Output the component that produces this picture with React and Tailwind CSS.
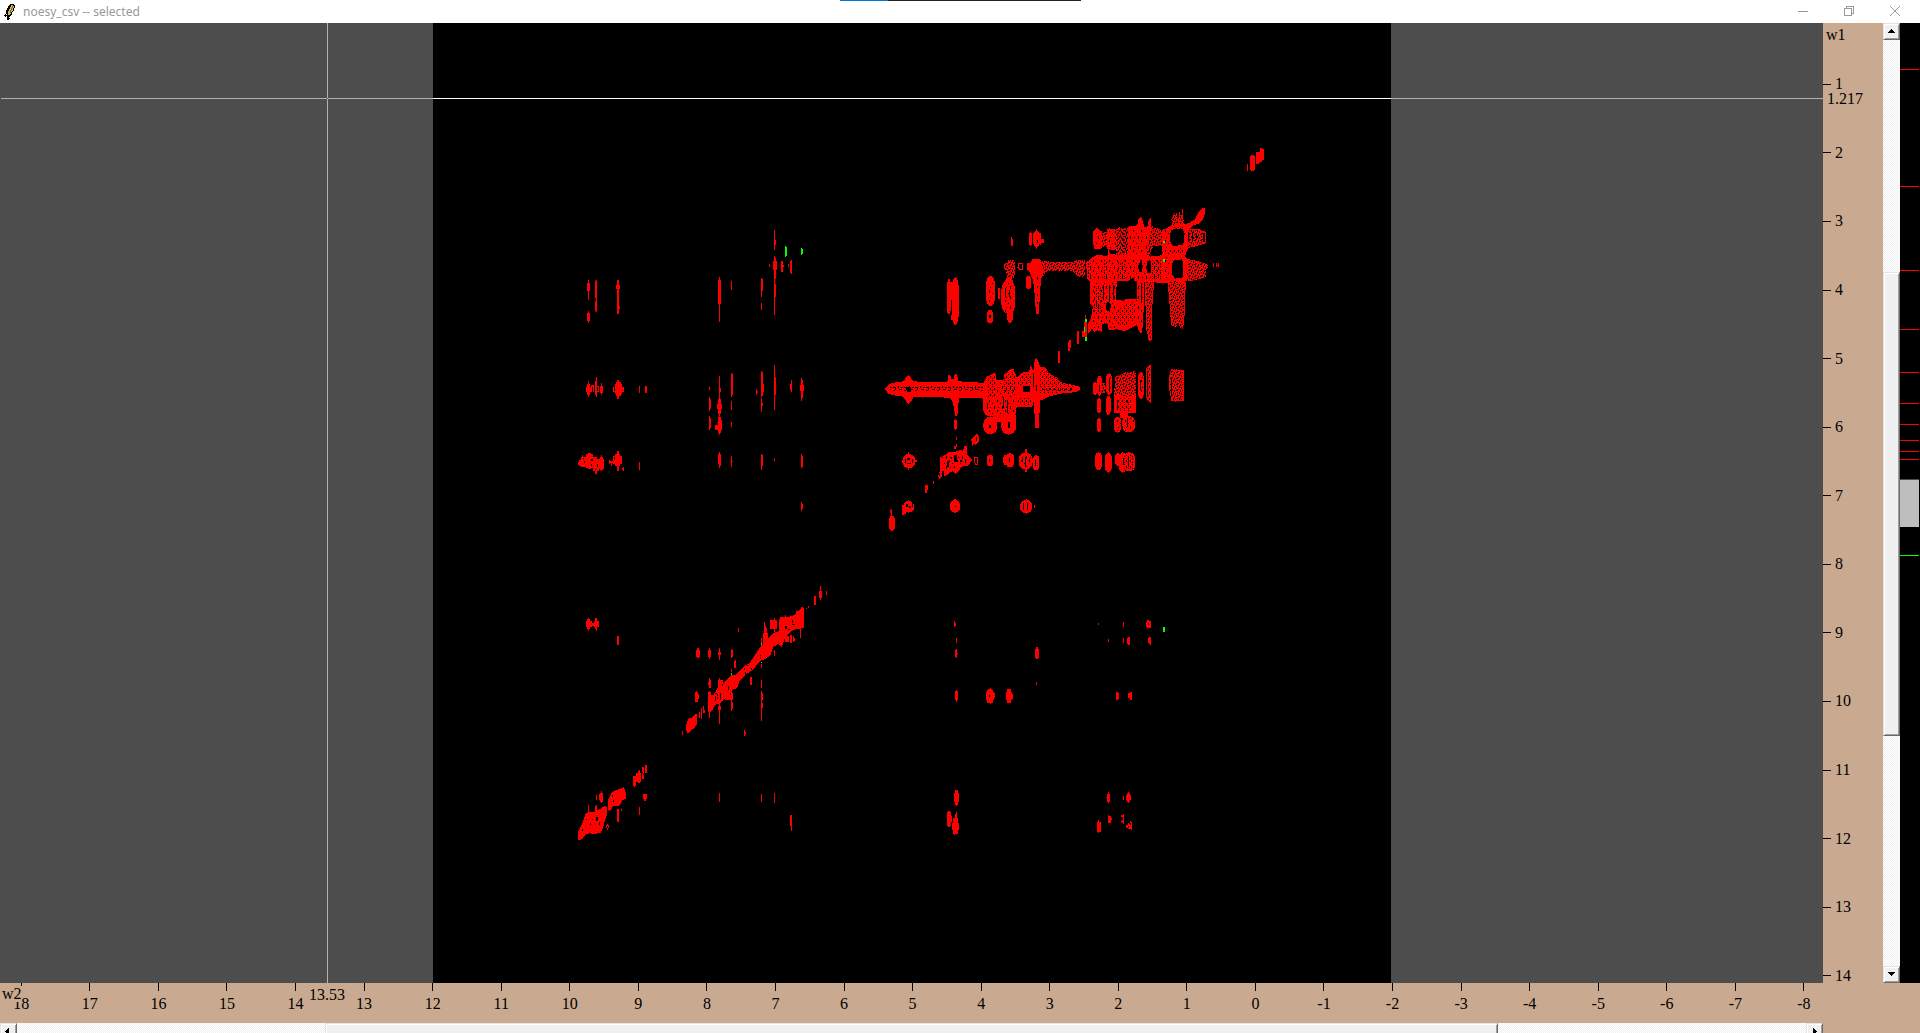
import React from "react";

const X_TICKS = Array.from({ length: 27 }, (_, i) => 18 - i);
const Y_TICKS = Array.from({ length: 14 }, (_, i) => i + 1);

const LEVELS = [69, 186, 270, 329, 372, 403, 424, 440, 451, 459];

/* Peak boxes are "x0 y0 x1 y1" lists, in thirds of a plot pixel, relative to the zone's origin. */
const ZONES = [
  {
    id: "upper-left",
    x: 550,
    y: 220,
    red: `114 180 117 240,111 189 120 214,111 278 120 303,114 273 117 309,135 183 141 234,138 180 141 276,135 243 141 273,
      201 180 207 282,198 194 210 208,204 258 210 267,504 180 513 252,507 171 510 306,543 183 546 210,633 174 636 231,633 177 639 213,
      633 249 636 270,672 30 675 90,672 60 678 75,672 108 675 285,669 123 681 150,672 114 678 177,672 192 678 231,657 132 660 141,
      693 123 699 156,699 135 702 141,714 132 717 141,720 123 726 159,723 120 726 162,
      108 500 126 516,111 491 120 524,114 483 117 531,123 495 132 500,129 500 131 516,135 483 140 526,138 471 141 531,141 498 147 516,
      150 498 159 519,153 489 156 525,189 500 222 516,195 491 216 521,198 486 213 527,201 480 207 537,267 498 270 519,285 498 291 519,
      477 501 480 510,477 531 480 573,477 537 483 567,507 468 510 645,510 504 513 516,504 537 513 582,501 552 516 568,504 591 513 640,
      507 600 516 630,495 615 504 630,501 606 507 610,543 459 546 531,543 462 549 525,543 543 546 570,543 606 546 621,
      477 588 480 630,477 594 483 624,633 453 636 531,633 457 639 528,636 492 642 516,618 507 621 525,618 513 624 519,633 534 636 576,
      633 549 639 558,672 435 675 570,672 471 678 525,720 492 726 510,723 480 726 516,753 474 756 543,753 480 759 534,750 495 762 513,
      84 726 100 735,87 720 103 738,93 711 102 741,96 705 99 741,102 711 135 741,108 702 129 744,114 699 123 747,
      129 717 147 753,135 711 141 762,144 717 162 747,150 711 159 750,153 705 156 753,177 720 180 732,180 723 192 729,183 729 186 738,
      189 708 216 732,195 702 210 738,201 693 207 753,216 744 222 750,219 741 222 753,267 726 270 750,504 702 513 732,507 696 510 744,
      510 705 513 738,543 708 546 741,543 723 549 726,633 702 636 750,633 705 639 738,672 714 675 723,753 702 756 744,753 708 759 741,
      753 846 756 873,753 852 759 867`,
    black: `126 504 129 512,192 502 195 514,141 501 144 513,500 618 502 626,98 714 101 717,123 718 129 724,123 731 127 738,
      141 733 144 741,101 722 104 730,192 711 195 719,135 747 138 750`,
    green: `705 78 708 111,705 81 711 109,753 84 756 105,753 87 759 102`,
  },
  {
    id: "lower-left",
    x: 560,
    y: 560,
    red: `78 184 95 202,81 177 90 208,84 174 87 213,95 189 102 198,102 184 117 200,105 174 111 208,108 174 111 213,171 228 177 256,
      534 204 537 216,780 78 783 120,777 92 786 113,762 108 768 134,798 93 801 105,744 138 747 144,738 144 741 147,
      408 270 420 290,411 264 417 294,444 270 453 290,447 264 450 297,477 264 480 299,474 275 483 286,513 267 516 294,513 270 519 290,
      522 303 528 324,525 299 528 324,513 327 516 336,570 351 576 375,604 312 607 324,603 360 606 384,603 393 606 483,603 399 609 420,603 429 609 444,
      405 396 414 426,409 393 412 426,405 402 417 417,447 354 450 384,444 366 453 375,447 360 453 384,366 513 369 525,552 510 555 528,552 516 558 522,
      444 396 453 456,447 393 450 474,474 360 490 396,477 354 480 396,477 430 480 492,474 438 483 450,513 400 516 453,513 426 519 447,
      495 399 519 420,513 345 519 360,612 186 615 250,609 219 623 262,615 198 618 262,618 204 621 262,603 234 606 268,
      630 180 651 207,642 174 645 215,630 180 636 206,657 177 664 216,660 170 684 210,675 165 678 210,684 170 705 204,708 152 732 204,
      720 204 723 234,675 228 687 246,690 225 696 250,699 228 702 246,699 234 705 243,642 270 645 288,
      417 456 420 474,423 444 426 477,429 438 432 460,429 450 435 459,219 648 228 678,222 648 225 681,228 638 243 665,234 633 240 669,237 630 240 665,
      246 621 252 657,255 615 261 639,108 705 111 720,117 702 129 720,123 693 126 729,120 699 129 726,249 702 261 717,252 702 258 723,
      84 735 87 762,105 738 111 762,108 735 111 762,171 747 177 786,183 747 186 753,237 741 240 765,138 794 147 804,141 792 144 809,
      477 699 480 726,603 702 606 726,642 699 645 729,690 765 696 798,693 765 696 813`,
    poly: `54,815 66,792 78,758 105,756 135,737 141,741 141,765 135,780 129,803 123,818 105,822 90,820 78,822 66,838 54,842|
      144,720 150,708 156,697 168,690 186,684 192,682 198,700 198,716 186,722 180,736 168,738 160,738 153,750 146,756 144,735|
      378,495 387,474 393,474 408,462 411,464 411,492 402,506 393,510 384,521 378,512|
      444,410 462,403 477,378 495,366 513,347 528,345 550,320 570,308 585,285 600,262 620,240 640,219 655,215 657,180 675,174 690,170 705,165 720,148 726,140 732,144 732,204 708,207 690,216 672,240 666,262 655,250 640,262 630,288 615,297 600,303 580,328 562,340 540,360 531,385 516,390 513,415 495,417 480,430 465,435 456,452 444,458`,
    black: `651 180 657 214,696 180 700 190,675 198 680 206,684 207 690 211,552 324 555 329,561 315 564 318,573 324 576 330,555 336 558 342,
      600 291 603 297,471 402 474 407,471 411 474 417,466 408 469 422,480 399 483 420,486 372 489 378,505 378 508 390,510 399 513 404,
      246 636 249 640,250 643 252 646,160 720 163 725,156 706 159 711,108 770 114 782,96 777 99 780,90 790 94 795,66 806 69 812,
      118 787 121 795,78 777 81 779,696 192 705 194,555 342 558 348,600 285 603 289,465 399 471 401,142 797 144 803`,
    green: `603 249 606 255,603 306 606 309,513 339 516 346`,
  },
  {
    id: "lower-right",
    x: 920,
    y: 600,
    red: `102 63 105 81,102 69 108 78,108 114 111 129,108 147 111 174,105 150 111 171,108 159 114 162,348 141 354 177,345 147 357 174,
      348 246 351 255,105 273 114 300,108 270 111 306,198 279 225 295,198 276 222 300,201 270 219 309,210 264 213 312,204 267 216 309,
      258 276 276 300,261 267 273 309,261 282 279 297,534 69 537 75,609 66 612 81,678 66 693 80,681 60 687 84,681 63 693 83,
      564 117 567 126,609 114 612 129,621 114 630 132,624 111 630 135,687 111 693 132,684 114 693 129,690 111 693 135,
      588 276 594 300,588 279 597 297,624 279 636 294,630 276 636 300,102 579 117 606,105 570 114 615,108 570 111 618,
      81 636 93 678,84 633 90 681,90 648 96 666,96 669 117 690,99 654 114 702,105 642 111 702,108 636 111 660,102 690 105 705,
      564 576 567 609,561 582 570 606,558 591 564 594,609 588 612 600,618 585 633 600,621 579 630 606,624 576 627 609,
      531 666 543 696,534 660 537 699,564 645 567 669,564 648 573 669,570 654 576 660,603 645 609 651,609 642 612 672,606 660 612 666,
      603 663 606 669,618 675 627 684,624 669 627 687,627 672 636 687,630 663 633 669,633 666 636 690`,
    black: `207 285 210 291,684 69 687 76,625 678 627 684,631 672 633 675`,
    green: `729 81 735 96`,
  },
  {
    id: "top-right",
    x: 1060,
    y: 130,
    red: `561 102 564 123,570 78 585 120,573 75 582 123,588 66 597 102,588 72 600 99,594 66 606 96,600 54 606 96,600 57 612 90`,
  },
];

function boxes(list, fill, round) {
  return list.split(",").map((s, i) => {
    const [a, b, c, d] = s.trim().split(/\s+/).map(Number);
    const rx = round ? (c - a) / 2 : 0;
    const ry = round ? Math.min((d - b) / 2, Math.max((c - a) / 2, (d - b) * 0.3)) : 0;
    return <rect key={fill + i} x={a} y={b} width={c - a} height={d - b} rx={rx} ry={ry} fill={fill} />;
  });
}

const polys = (list, fill) =>
  list.split("|").map((p, i) => <polygon key={fill + i} points={p.trim()} fill={fill} />);

function Zone({ zone }) {
  return (
    <g transform={`translate(${zone.x} ${zone.y}) scale(${1 / 3})`}>
      {zone.poly && polys(zone.poly, "#f00")}
      {boxes(zone.red, "#f00")}
      {zone.black && boxes(zone.black, "#000")}
      {zone.green && boxes(zone.green, "#0f0")}
    </g>
  );
}

/* The crowded aliphatic region: overlapping contour levels give a woven texture. */
function Aliphatic() {
  return (
    <g transform={`translate(860 200) scale(${1 / 3})`}>
      {boxes(
        `507 97 516 137,519 93 540 140,525 87 534 146,261 235 273 345,275 232 297 375,378 228 405 318,381 330 399 370,
        413 262 421 298,424 240 466 342,432 230 462 340,441 300 459 370,498 228 513 268,282 658 291 690,381 765 399 798,
        430 765 441 795,438 760 462 802,519 766 538 811,705 757 726 810,735 757 756 818,765 760 783 797,777 757 799 818,
        789 757 826 814,270 900 300 938,480 900 517 940,87 948 105 992,711 594 723 640,738 588 753 645,711 655 723 697,
        762 650 783 698,785 648 826 697,370 588 412 650,370 650 411 703,424 630 468 704,127 762 166 805,
        476 757 518 808,130 903 162 938,833 516 852 597,711 527 726 588,699 545 711 585,738 520 757 585`,
        "#f00",
        true
      )}
      {boxes(
        `453 112 456 137,456 118 459 137,540 100 544 134,544 118 552 128,264 245 290 300,261 245 267 340,273 340 280 360,
        594 453 600 489,651 393 657 432,623 426 630 454,627 420 633 445,675 345 678 366,672 366 681 380,672 380 681 412,666 393 675 412,
        288 711 291 720,282 738 288 748,288 732 291 741,195 854 204 870,195 866 200 880,219 843 222 852,522 915 525 924,
        94 928 97 955,91 931 97 939,127 914 132 945,132 930 137 942,1060 190 1063 200,1068 190 1070 200,1070 194 1074 197,1074 190 1077 200,
        145 757 148 810,127 779 170 786,495 748 500 815,145 900 148 938,283 897 288 938,497 897 500 942,
        762 585 827 640,780 640 805 655,400 600 430 665`,
        "#f00"
      )}

      {polys(
        `74,567 84,555 100,548 130,544 138,532 145,526 152,532 160,544 200,546 262,546 265,526 271,526 275,538 281,538 284,522 290,522 296,544 340,546 370,549 380,530 400,520 406,520 410,540 430,540 434,518 440,520 452,507 460,507 470,532 490,516 507,515 511,499 516,503 520,515 523,486 529,472 536,486 540,502 555,500 565,518 580,527 590,531 600,545 640,555 658,560 660,568 650,576 600,581 565,590 545,600 540,600 537,683 525,683 522,600 517,620 470,620 465,650 430,650 400,650 370,620 370,596 340,593 297,594 292,648 286,648 278,606 272,596 240,590 160,592 152,606 145,612 137,602 130,590 100,586 84,580|
        240,772 255,765 265,757 285,756 300,750 308,752 314,738 320,738 322,765 338,780 322,798 304,800 295,815 287,823 278,812 262,825 253,829 253,812 240,814|
        235,825 241,812 245,812 245,832 238,838 235,830|
        334,718 341,712 345,706 350,700 356,708 356,724 348,735 342,730 336,740`,
        "#f00"
      )}

      {polys(
        `432,188 441,188 444,180 462,180 466,196 466,212 462,235 441,235 438,212 432,210|
        545,184 640,186 650,181 675,181 675,225 668,232 655,232 640,214 560,214 545,236|
        726,98 742,95 742,140 726,140|
        765,90 775,82 800,84 808,80 832,76 850,82 876,78 890,84 906,92 908,137 880,137 870,170 765,170|
        978,92 1000,90 1012,86 1037,95 1037,130 1010,138 978,145|
        978,178 1010,184 1040,192 1046,198 1036,212 1040,230 1010,240 978,244|
        934,75 940,50 950,38 955,60 962,45 968,28 972,80|
        925,248 976,245 972,330 970,390 962,385 955,372 945,382 935,378 934,330|
        856,242 881,242 876,312 873,350 873,425 866,422 860,390 860,330|
        766,530 800,516 827,514 827,584 800,590 762,584|
        726,548 735,550 738,565 735,578 726,580|
        928,550 934,508 945,508 970,510 972,600 945,605 934,600|
        858,510 868,500 873,495 873,610 862,600 858,580`,
        "url(#weave)"
      )}

      {polys(
        `510,190 519,176 540,176 546,190 550,215 544,235 540,270 537,343 528,343 523,270 519,240 508,215 502,208 502,190|
        699,95 711,84 726,95 726,142 720,148 701,146|
        740,90 748,85 764,88 764,165 744,165 740,140|
        803,80 832,76 836,56 842,52 848,60 852,80 862,80 866,60 872,52 875,90 858,170 803,170|
        678,188 700,170 716,164 770,166 830,160 870,170 905,166 918,150 918,250 870,246 830,243 690,246 682,238|
        690,244 770,244 770,300 830,296 830,240 852,240 850,370 845,400 838,396 830,375 795,393 770,388 746,390 742,370 727,372 725,396 712,390 703,396 697,385 685,400 683,375 694,350 699,318 690,310|
        905,90 920,85 935,75 985,70 1005,58 1015,35 1028,24 1035,24 1033,52 1018,70 1000,76 985,92 985,142 975,170 985,180 980,240 972,250 945,244 920,250 908,200`,
        "#f00"
      )}

      {polys(
        `771,92 800,88 800,160 771,165|683,195 695,188 695,235 683,235|728,180 742,175 742,240 728,240|
        775,185 798,180 798,236 775,238|876,180 904,176 904,236 876,238|830,300 823,300 790,318 765,330 765,372 790,378 825,360|
        383,530 404,524 404,592 383,592|432,524 466,515 466,585 432,580|540,510 560,512 592,535 640,560 640,570 592,578 540,580|
        470,540 490,522 515,520 515,550 470,555|470,592 515,592 515,616 470,612|
        935,80 968,80 970,88 940,90|925,150 970,142 975,155 930,164|700,255 722,255 722,340 700,340|
        790,765 820,765 820,806 790,806|775,590 815,590 815,635 775,635`,
        "url(#dots)"
      )}
      {polys(
        `744,92 762,92 762,162 744,162|808,86 850,86 846,164 808,164|856,100 874,100 874,164 856,164|
        684,182 870,176 904,178 904,240 684,240|694,250 766,250 766,385 700,385|834,250 850,250 844,390 834,375|
        912,90 930,88 930,240 912,240|380,600 462,600 462,645 380,645|765,655 822,655 822,692 765,692|
        246,770 318,762 318,792 250,815|382,245 401,245 401,305 382,305|430,245 460,245 460,335 430,335|
        484,765 512,765 512,802 484,802|740,530 756,530 756,578 740,578|836,530 848,530 848,585 836,585|
        410,545 465,545 465,590 410,590|705,100 722,100 722,138 705,138`,
        "url(#specks)"
      )}
      <rect x="90" y="558" width="280" height="18" fill="url(#dashes)" />
      <rect x="545" y="563" width="100" height="9" fill="url(#dashes)" />
      {polys(
        `932,92 945,86 968,86 974,100 970,135 940,138 930,125|
        940,182 965,178 970,190 968,232 945,236 936,222 936,195|
        768,262 780,258 790,265 808,240 822,232 822,300 812,290 798,292 790,305 778,297 768,300|
        884,142 904,135 908,160 890,158 876,166 874,152|
        721,150 745,145 745,166 730,168 721,162|750,148 770,152 768,164 750,162|
        835,196 842,180 848,196 846,216 838,216|862,184 872,184 872,220 862,220|
        738,312 745,305 753,315 750,330 740,334`,
        "#000"
      )}
      {boxes(
        `141 560 153 575,490 559 510 577,387 345 393 354,531 120 534 128,273 300 276 345,387 270 390 280,436 265 439 290,448 270 451 290,
        444 665 450 685,386 674 392 683,382 610 385 626,430 590 433 625,441 600 445 640,520 520 522 560,528 555 531 573,
        531 230 534 240,531 258 534 264,531 282 534 288,531 306 534 312,984 96 987 125,996 96 999 125,1008 100 1011 120,1030 100 1034 125,
        852 252 855 380,843 250 846 310,729 255 732 300,747 255 750 300,759 255 762 300,708 300 711 320,920 255 926 262,
        142 775 151 780,142 788 154 792,136 777 139 790,157 777 160 789,496 770 499 800,486 776 489 786,506 776 509 786,
        282 766 291 785,262 782 267 800,272 770 275 776,300 780 306 786,316 776 318 790,238 820 241 828,387 777 391 786,448 775 451 785,
        526 780 529 798,137 913 143 920,147 918 153 923,156 908 158 920,285 917 289 922,490 910 493 930,500 910 503 930,
        348 710 351 722,344 565 347 571,771 600 774 630,801 600 804 610,801 655 804 680,840 540 843 570,748 535 751 570,
        717 555 720 575,861 520 864 590,933 530 936 585,804 770 807 800,788 775 791 795`,
        "#000"
      )}
      <g fill="none" stroke="#f00" strokeWidth="3">
        <path d="M475 191h12v16h-8l-5-5zM345 772h7v22h-5l-3-8zM859 505l12-9v110l-11-14zM929 530l5-20h36v92h-34l-7-35zM978 90l34-3 24 10v30l-26 10-32 6M978 178l32 6 32 10M925 250l10 125M976 245l-5 130M856 245l4 145 12 34M881 245l-5 67-3 110" />
        <path d="M850 532v44M935 60l8-20M955 70l5-35M968 28v50" />
      </g>
      {boxes("908 123 915 130,908 177 915 186,675 357 681 366,672 380 675 396,675 411 681 423", "#0f0")}
    </g>
  );
}

function Spectrum() {
  return (
    <svg
      className="block h-full w-full"
      viewBox="0 23 1823 960"
      preserveAspectRatio="none"
      shapeRendering="crispEdges"
      role="img"
      aria-label="NOESY contour plot"
    >
      <defs>
        <pattern id="weave" width="18" height="18" patternUnits="userSpaceOnUse">
          <rect width="18" height="18" fill="#f00" />
          <path fill="#000" d="M3 0h3v6h-3zM9 3h3v6h-3zM0 9h3v3h-3zM6 12h3v6h-3zM15 9h3v6h-3zM15 0h3v3h-3zM12 12h3v3h-3z" />
        </pattern>
        <pattern id="dots" width="12" height="18" patternUnits="userSpaceOnUse">
          <path fill="#000" d="M0 0h3v3h-3zM6 6h3v6h-3zM0 12h3v3h-3z" />
        </pattern>
        <pattern id="specks" width="24" height="30" patternUnits="userSpaceOnUse">
          <path fill="#000" d="M3 0h3v6h-3zM12 9h3v3h-3zM18 18h3v9h-3zM6 21h3v3h-3z" />
        </pattern>
        <pattern id="dashes" width="33" height="18" patternUnits="userSpaceOnUse">
          <path fill="#000" d="M0 3h9v3h-9zM6 6h3v6h-3zM15 0h3v6h-3zM18 9h9v3h-9zM24 3h6v3h-6zM0 12h6v3h-6z" />
        </pattern>
      </defs>
      <rect y="23" width="1823" height="960" fill="#4d4d4d" />
      <rect x="433" y="23" width="958" height="960" fill="#000" />
      {ZONES.map((z) => (
        <Zone key={z.id} zone={z} />
      ))}
      <Aliphatic />
      <path d="M1 98h432v1H1zM1391 98h432v1h-432z" fill="#b2b2b2" />
      <path d="M433 98h958v1H433z" fill="#fff" />
      <path d="M327 23h1v75h-1zM327 99h1v884h-1z" fill="#b2b2b2" />
      <path d="M327 98h1v1h-1z" fill="#4d4d4d" />
    </svg>
  );
}

const ARROWS = {
  up: "M8 6h1v1h1v1h1v1h1v1h-7v-1h1v-1h1v-1h1z",
  down: "M5 6h7v1h-1v1h-1v1h-1v1h-1v-1h-1v-1h-1v-1h-1z",
  left: "M9 5v7h-1v-1h-1v-1h-1v-1h-1v-1h1v-1h1v-1h1v-1z",
  right: "M7 5v7h1v-1h1v-1h1v-1h1v-1h-1v-1h-1v-1h-1v-1z",
};

const RAISED =
  "border border-t-[#e3e3e3] border-l-[#e3e3e3] border-r-[#696969] border-b-[#696969] bg-[#f0f0f0] shadow-[inset_1px_1px_0_#fff,inset_-1px_-1px_0_#a0a0a0]";
const TRACK = "bg-[repeating-conic-gradient(#fff_0_25%,#f0f0f0_0_50%)] bg-[length:2px_2px]";

function ScrollButton({ dir }) {
  return (
    <button type="button" aria-label={`Scroll ${dir}`} className={`h-[17px] w-[17px] shrink-0 ${RAISED}`}>
      <svg className="-m-px block h-[17px] w-[17px]" viewBox="0 0 17 17" shapeRendering="crispEdges">
        <path d={ARROWS[dir]} />
      </svg>
    </button>
  );
}

function TitleBar() {
  return (
    <header className="relative flex h-[23px] shrink-0 items-center bg-white text-[#999]">
      <div className="absolute top-0 left-[840px] flex h-px w-[241px]">
        <span className="w-12 bg-[#0078d7]" />
        <span className="flex-1 bg-[#222]" />
      </div>
      <svg className="ml-1 h-4 w-4" viewBox="0 0 16 16" shapeRendering="crispEdges" aria-hidden="true">
        <path
          d="M8 0h2v1h1v3h-1v3h-1v1h-1v3h-1v1h-1v1h-1v1h1v1h-1v1h-2v-4h-1v1h-1v-1h-1v-1h1v-1h1v1h1v-1h-1v-4h1v-2h1v-2h1v-1h1v-1h1z"
          fill="#000"
        />
        <path d="M7 1h2v1h1v2h-1v3h-1v1h-1v2h-1v1h-2v-4h1v-2h1v-2h1z" fill="#c9b458" />
        <path d="M8 2h1v2h-1v2h-1v3h-1v-3h1v-2h1z" fill="#7d6f34" />
      </svg>
      <h1 className="ml-[3px] font-['Noto_Sans',sans-serif] text-[12px] leading-4">noesy_csv -- selected</h1>
      <div className="mr-[2px] ml-auto flex h-[21px] self-start">
        <button type="button" aria-label="Minimize" className="flex h-full w-[46px] items-center justify-center">
          <svg width="10" height="10" viewBox="0 0 10 10" shapeRendering="crispEdges">
            <path d="M0 5h10v1H0z" fill="#999" />
          </svg>
        </button>
        <button type="button" aria-label="Restore" className="flex h-full w-[46px] items-center justify-center">
          <svg width="10" height="10" viewBox="0 0 10 10" shapeRendering="crispEdges" fill="none" stroke="#999">
            <path d="M.5 2.5h7v7h-7zM2.5 2V.5h7v7H8" />
          </svg>
        </button>
        <button type="button" aria-label="Close" className="flex h-full w-[46px] items-center justify-center">
          <svg width="10" height="10" viewBox="0 0 10 10" fill="none" stroke="#999">
            <path d="M0 0l10 10M10 0L0 10" />
          </svg>
        </button>
      </div>
    </header>
  );
}

function RightAxis() {
  return (
    <div className="relative h-full w-[60px] shrink-0">
      <span className="absolute top-[3px] left-[3px]">w1</span>
      <div className="box-content flex h-full flex-col pt-[27px]">
        {Y_TICKS.map((t) => (
          <div key={t} className="flex flex-1 items-center">
            <span className="h-px w-2 bg-black" />
            <span className="ml-1">{t}</span>
          </div>
        ))}
      </div>
      <span className="absolute top-[67px] left-1">1.217</span>
    </div>
  );
}

function BottomAxis() {
  return (
    <div className="relative h-10 overflow-hidden">
      <div className="-mr-[15px] -ml-[13px] flex h-full">
        {X_TICKS.map((t) => (
          <div key={t} className="flex flex-1 flex-col items-center">
            <span className="h-2 w-px bg-black" />
            <span className="mt-1">{t}</span>
          </div>
        ))}
      </div>
      <span className="absolute top-[3px] left-[2px] bg-[#c9aa90] leading-4">w2</span>
      <span className="absolute top-[3px] left-[309px]">13.53</span>
    </div>
  );
}

export default function App() {
  return (
    <div className="flex h-screen w-full flex-col overflow-hidden bg-[#c9aa90] font-['Liberation_Serif',serif] text-base leading-[18px] text-black">
      <TitleBar />
      <div className="flex min-h-0 flex-1 overflow-hidden">
        <main className="min-w-0 flex-1">
          <Spectrum />
        </main>
        <RightAxis />
        <div className={`flex w-[17px] shrink-0 flex-col ${TRACK}`}>
          <ScrollButton dir="up" />
          <div className="flex-[232]" />
          <div className={`flex-[463] ${RAISED}`} />
          <div className="flex-[231]" />
          <ScrollButton dir="down" />
        </div>
        <svg
          className="h-full w-5 shrink-0"
          viewBox="0 23 20 960"
          preserveAspectRatio="none"
          shapeRendering="crispEdges"
          role="img"
          aria-label="Contour levels"
        >
          <rect y="23" width="20" height="960" fill="#000" />
          {LEVELS.map((y) => (
            <rect key={y} y={y} width="19" height="1" fill="#f00" />
          ))}
          <rect y="479" width="19" height="48" fill="#4d4d4d" />
          <rect y="480" width="19" height="47" fill="#bebebe" />
          <rect y="555" width="19" height="1" fill="#0f0" />
        </svg>
      </div>
      <footer className="mr-[97px] shrink-0">
        <BottomAxis />
        <div className="h-[10px] overflow-hidden">
          <div className={`flex h-[17px] ${TRACK}`}>
            <ScrollButton dir="left" />
            <div className="flex-[308]" />
            <div className={`flex-[1173] ${RAISED}`} />
            <div className="flex-[308]" />
            <ScrollButton dir="right" />
          </div>
        </div>
      </footer>
    </div>
  );
}
